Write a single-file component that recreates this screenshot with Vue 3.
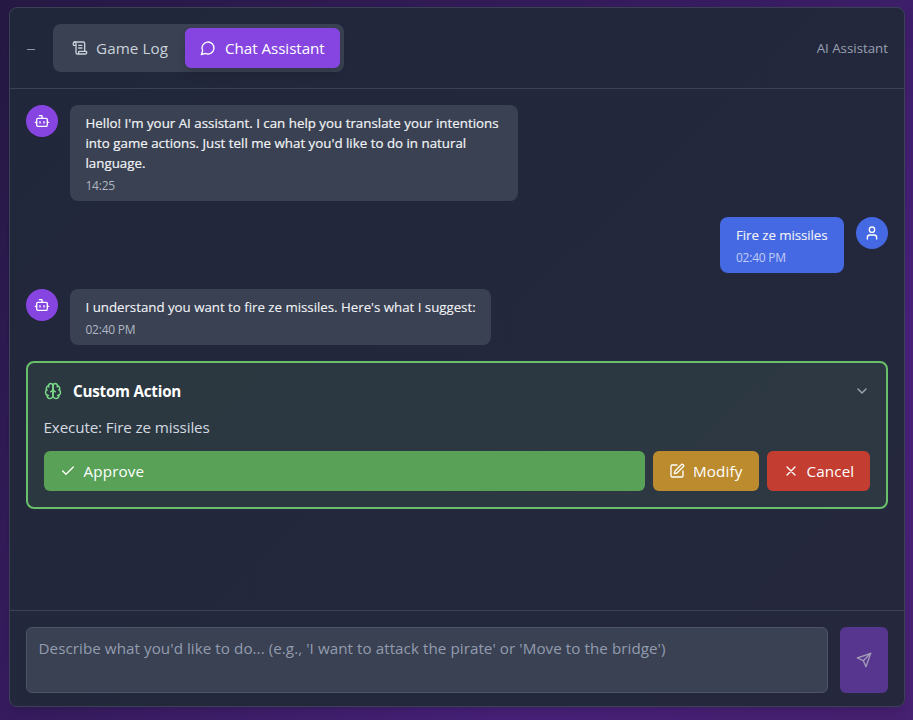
<script setup>
import { ref } from 'vue'

const draft = ref('')
const messages = [
  { id: 1, from: 'bot', text: "Hello! I'm your AI assistant. I can help you translate your intentions into game actions. Just tell me what you'd like to do in natural language.", time: '14:25' },
  { id: 2, from: 'user', text: 'Fire ze missiles', time: '02:40 PM' },
  { id: 3, from: 'bot', text: "I understand you want to fire ze missiles. Here's what I suggest:", time: '02:40 PM' },
]
</script>

<template>
  <main class="page">
    <section class="panel">
      <header class="head">
        <div class="head-left">
          <button class="collapse" aria-label="Collapse"><span class="dash"></span></button>
          <nav class="tabs">
            <button class="tab tab-log">
              <svg class="icon" viewBox="0 0 24 24"><path d="M15 12h-5M15 8h-5M19 17V5a2 2 0 0 0-2-2H4" /><path d="M8 21h12a2 2 0 0 0 2-2v-1a1 1 0 0 0-1-1H11a1 1 0 0 0-1 1v1a2 2 0 1 1-4 0V5a2 2 0 1 0-4 0v2a1 1 0 0 0 1 1h3" /></svg>
              <span>Game Log</span>
            </button>
            <button class="tab tab-chat">
              <svg class="icon" viewBox="0 0 24 24"><path d="M7.9 20A9 9 0 1 0 4 16.1L2 22Z" /></svg>
              <span>Chat Assistant</span>
            </button>
          </nav>
        </div>
        <span class="mode">AI Assistant</span>
      </header>

      <div class="feed">
        <div v-for="m in messages" :key="m.id" class="row" :class="m.from">
          <div class="avatar">
            <svg v-if="m.from === 'bot'" class="icon" viewBox="0 0 24 24"><path d="M12 8V4H8" /><rect width="16" height="12" x="4" y="8" rx="2" /><path d="M2 14h2M20 14h2M15 13v2M9 13v2" /></svg>
            <svg v-else class="icon" viewBox="0 0 24 24"><path d="M19 21v-2a4 4 0 0 0-4-4H9a4 4 0 0 0-4 4v2" /><circle cx="12" cy="7" r="4" /></svg>
          </div>
          <div class="bubble" :class="'bubble-' + m.id">
            <p class="text">{{ m.text }}</p>
            <p class="time">{{ m.time }}</p>
          </div>
        </div>

        <article class="action">
          <div class="action-head">
            <svg class="icon brain" viewBox="0 0 24 24"><path d="M12 5a3 3 0 1 0-5.997.125 4 4 0 0 0-2.526 5.77 4 4 0 0 0 .556 6.588A4 4 0 1 0 12 18Z" /><path d="M12 5a3 3 0 1 1 5.997.125 4 4 0 0 1 2.526 5.77 4 4 0 0 1-.556 6.588A4 4 0 1 1 12 18Z" /><path d="M15 13a4.5 4.5 0 0 1-3-4 4.5 4.5 0 0 1-3 4" /><path d="M17.599 6.5a3 3 0 0 0 .399-1.375M6.003 5.125A3 3 0 0 0 6.401 6.5M3.477 10.896a4 4 0 0 1 .585-.396M19.938 10.5a4 4 0 0 1 .585.396M6 18a4 4 0 0 1-1.967-.516M19.967 17.484A4 4 0 0 1 18 18" /></svg>
            <h3><span>Custom Action</span></h3>
            <svg class="icon chevron" viewBox="0 0 24 24"><path d="m6 9 6 6 6-6" /></svg>
          </div>
          <p class="detail"><span>Execute: Fire ze missiles</span></p>
          <div class="buttons">
            <button class="btn approve">
              <svg class="icon" viewBox="0 0 24 24"><path d="M20 6 9 17l-5-5" /></svg>
              <span>Approve</span>
            </button>
            <button class="btn modify">
              <svg class="icon" viewBox="0 0 24 24"><path d="M12 3H5a2 2 0 0 0-2 2v14a2 2 0 0 0 2 2h14a2 2 0 0 0 2-2v-7" /><path d="M18.375 2.625a1 1 0 0 1 3 3l-9.013 9.014a2 2 0 0 1-.853.505l-2.873.84a.5.5 0 0 1-.62-.62l.84-2.873a2 2 0 0 1 .506-.852z" /></svg>
              <span>Modify</span>
            </button>
            <button class="btn cancel">
              <svg class="icon" viewBox="0 0 24 24"><path d="M18 6 6 18M6 6l12 12" /></svg>
              <span>Cancel</span>
            </button>
          </div>
        </article>
      </div>

      <footer class="composer">
        <textarea v-model="draft" placeholder="Describe what you'd like to do... (e.g., 'I want to attack the pirate' or 'Move to the bridge')"></textarea>
        <button class="send" aria-label="Send">
          <svg class="icon" viewBox="0 0 24 24"><path d="m22 2-7 20-4-9-9-4Z" /><path d="M22 2 11 13" /></svg>
        </button>
      </footer>
    </section>
  </main>
</template>

<style>
body { background: #2b1a4d; overflow: hidden; }
</style>

<style scoped>
* { box-sizing: border-box; }
p, h3 { margin: 0; }
button { border: 0; padding: 0; margin: 0; background: none; font: inherit; color: inherit; letter-spacing: inherit; display: flex; align-items: center; }
.page {
  width: 913px; height: 720px; padding: 7px 8px 13px 9px;
  background: linear-gradient(135deg, #251943 0%, #371c60 45%, #48217a 75%, #472172 100%);
  font-family: "Open Sans", "Noto Sans", sans-serif;
  font-size: 15.2px; line-height: 24px; color: #fff;
}
.panel {
  width: 896px; height: 700px; display: flex; flex-direction: column;
  border: 1px solid #3a4254; border-radius: 8px;
  background: linear-gradient(135deg, #21273a, #25283d);
  box-shadow: 0 10px 15px -3px rgba(0, 0, 0, .1), 0 4px 6px -4px rgba(0, 0, 0, .1);
}
.icon { width: 16px; height: 16px; flex: none; fill: none; stroke: currentColor; stroke-width: 2; stroke-linecap: round; stroke-linejoin: round; }
span { white-space: nowrap; }
.head { height: 81px; flex: none; display: flex; align-items: center; justify-content: space-between; padding: 0 16px; border-bottom: 1px solid #3a4254; }
.head-left { display: flex; align-items: center; gap: 10px; }
.collapse { width: 17px; height: 24px; }
.dash { width: 8px; height: 1px; margin-left: 1px; margin-top: 2px; background: #8e96a5; }
.tabs { display: flex; padding: 4px; width: 291px; height: 48px; border-radius: 8px; background: #394152; }
.tab { height: 40px; gap: 8px; padding-left: 15px; border-radius: 6px; }
.tab-log { width: 128px; color: #cbd1da; letter-spacing: .1px; }
.tab-chat { width: 155px; gap: 9px; letter-spacing: -.05px; background: #8645e0; box-shadow: 0 6px 12px -3px rgba(0, 0, 0, .18); }
.mode { font-size: 13.3px; color: #98a1b2; }
.feed { flex: 1; padding: 16px; display: flex; flex-direction: column; gap: 16px; }
.row { display: flex; gap: 12px; align-items: flex-start; }
.row.user { flex-direction: row-reverse; }
.avatar { width: 32px; height: 32px; border-radius: 50%; display: flex; align-items: center; justify-content: center; background: #8645e0; flex: none; }
.user .avatar, .user .bubble { background: #4568e3; }
.bubble { border-radius: 8px; background: #394152; padding: 8px 0 7px 15.5px; }
.bubble-1 { width: 448px; padding-right: 16px; }
.bubble-2 { width: 124px; padding-left: 16px; }
.bubble-3 { width: 421px; }
.text { font-size: 13.3px; line-height: 20px; color: #f1f3f6; letter-spacing: -.02px; -webkit-text-stroke: .1px #f1f3f6; }
.bubble-1 .text { letter-spacing: .01px; -webkit-text-stroke: .2px #f1f3f6; }
.bubble-2 .text { letter-spacing: -.07px; }
.time { font-size: 12px; line-height: 16px; margin-top: 5px; color: #b0b6c1; letter-spacing: -.25px; }
.user .time { color: #c1cdf6; }
.action { height: 148px; padding: 16px; border: 2px solid #68c06a; border-radius: 8px; background: linear-gradient(135deg, #2b3840, #2d3842); }
.action-head { display: flex; align-items: center; height: 24px; }
.brain { width: 18px; height: 18px; color: #79d788; }
h3 { margin-left: 11px; font-size: 15.2px; font-weight: 700; line-height: 24px; letter-spacing: -.22px; }
.chevron { margin-left: auto; color: #a0a8b6; }
.detail { height: 24px; margin: 12px 0 0 -.5px; color: #d5d9e0; letter-spacing: -.12px; }
.buttons { display: flex; gap: 8px; margin-top: 12px; }
.btn { height: 40px; border-radius: 6px; padding-left: 16px; gap: 7.5px; letter-spacing: .15px; }
.approve { width: 601px; background: #58a156; }
.modify { width: 106px; gap: 8px; background: #bb8b2e; }
.cancel { width: 103px; background: #c33d31; }
.composer { height: 96px; flex: none; display: flex; gap: 12px; padding: 16px 16px 13px; border-top: 1px solid #3a4254; }
textarea { width: 802px; height: 66px; margin: 0; padding: 8px 11.5px; resize: none; outline: none; border: 1px solid #4c5668; border-radius: 6px; background: #394152; color: #fff; font: inherit; letter-spacing: .055px; }
textarea::placeholder { color: #939caf; opacity: 1; }
.send { width: 48px; height: 66px; justify-content: center; border-radius: 6px; background: #56368f; color: #a49bb9; }
</style>
